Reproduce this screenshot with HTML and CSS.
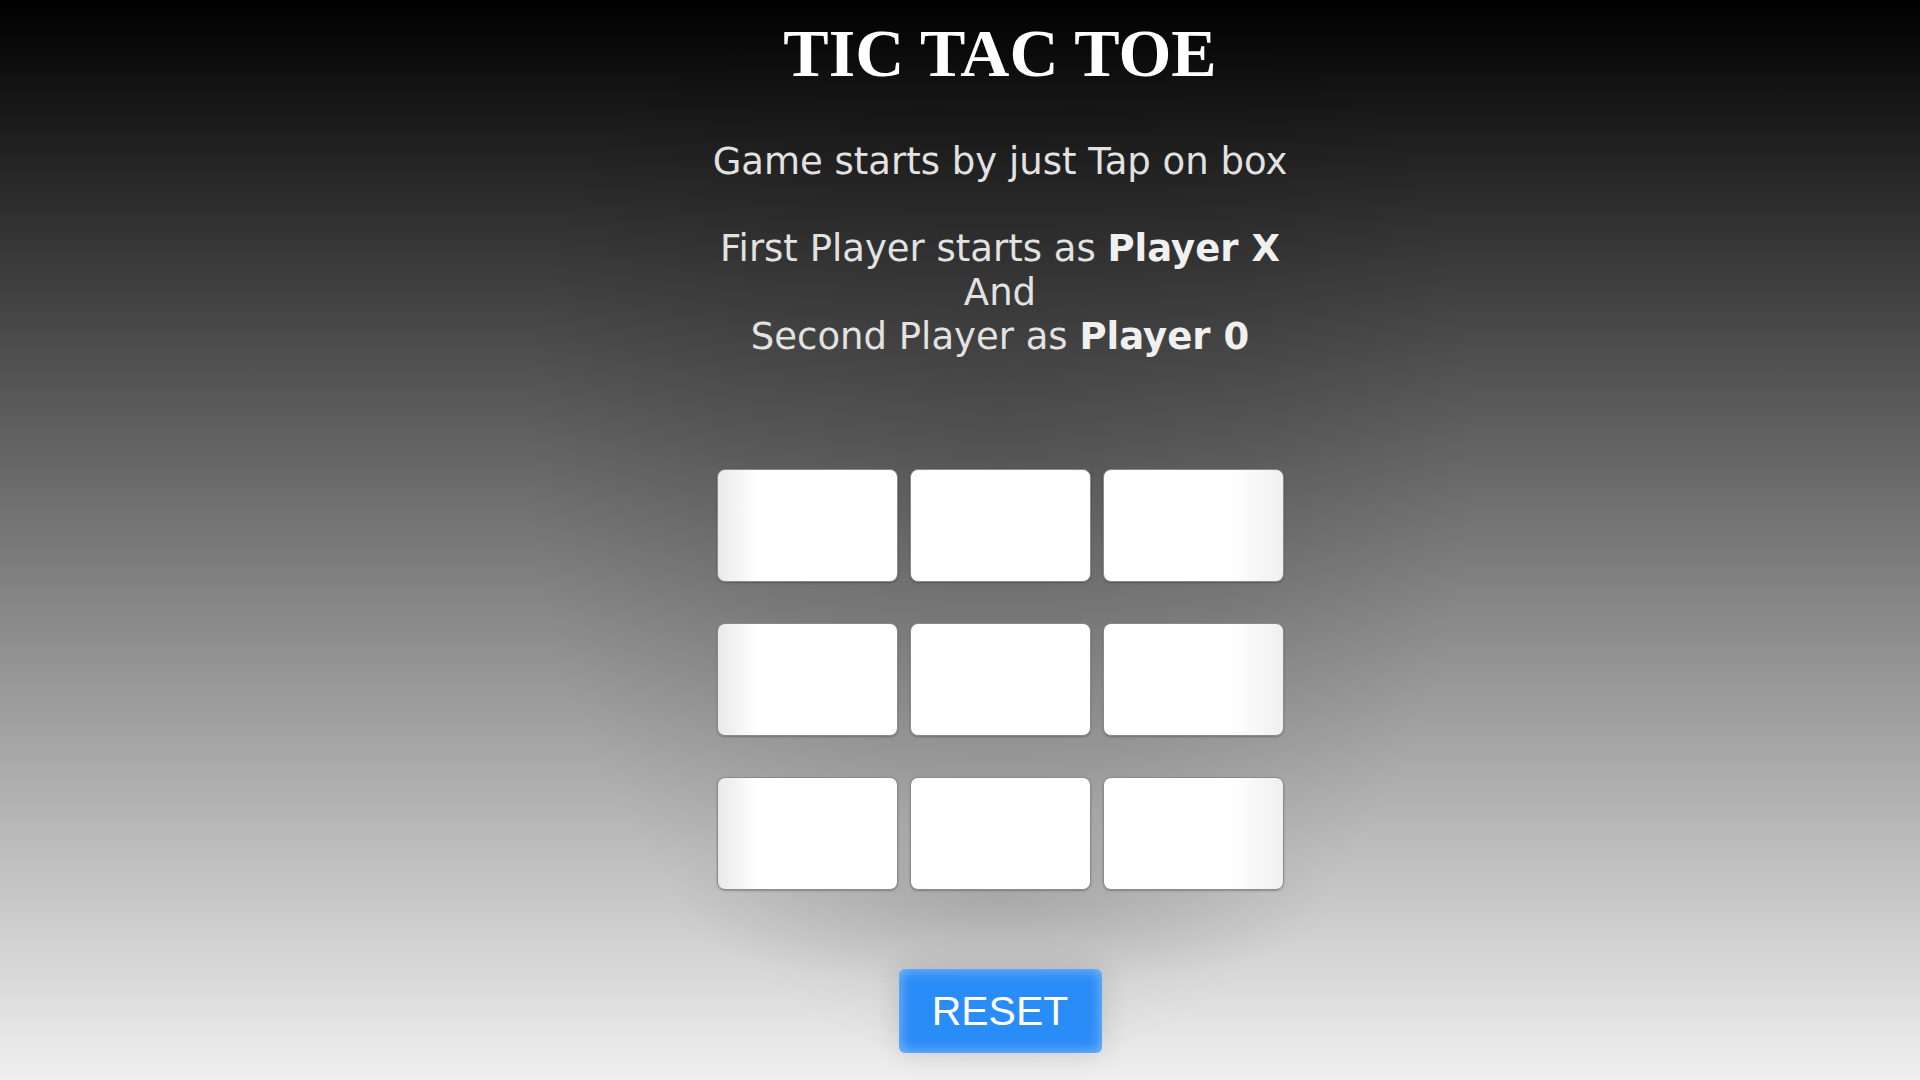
FILE: index.html
```html
<!DOCTYPE html>
<html lang="en">
<head>
<meta charset="utf-8">
<title>Tic Tac Toe</title>
<link rel="stylesheet" href="styles.css">
</head>
<body>
  <main class="game">
    <h1 class="title">TIC TAC TOE</h1>
    <p class="intro">Game starts by just Tap on box</p>
    <p class="rules">First Player starts as <b>Player X</b><br>And<br>Second Player as <b>Player 0</b></p>
    <div class="board">
      <button class="cell cell-left"></button>
      <button class="cell"></button>
      <button class="cell cell-right"></button>
      <button class="cell cell-left"></button>
      <button class="cell"></button>
      <button class="cell cell-right"></button>
      <button class="cell cell-left"></button>
      <button class="cell"></button>
      <button class="cell cell-right"></button>
    </div>
    <button class="reset">RESET</button>
  </main>
</body>
</html>
```
FILE: styles.css
```css
html, body {
  height: 100%;
}
body {
  margin: 0;
  padding-left: 80px;
  overflow: hidden;
  background:
    radial-gradient(ellipse 340px 90px at 1000px 900px, rgba(0, 0, 0, 0.1) 0%, rgba(0, 0, 0, 0) 100%),
    radial-gradient(ellipse 480px 640px at 1000px 430px, rgba(0, 0, 0, 0.17) 0%, rgba(0, 0, 0, 0.1) 55%, rgba(0, 0, 0, 0) 100%),
    linear-gradient(to bottom, #000 0%, #f0f0f0 100%);
  font-family: "DejaVu Sans", Verdana, sans-serif;
}
.game {
  width: 700px;
  margin: 0 auto;
  display: flex;
  flex-direction: column;
  align-items: center;
  text-align: center;
}
.title {
  margin: 20px 0 0;
  font-family: "Liberation Serif", "Times New Roman", serif;
  font-weight: bold;
  font-size: 68px;
  line-height: 67px;
  color: #fff;
}
.intro {
  margin: 53px 0 0;
  font-size: 37px;
  line-height: 44px;
  color: #e2e2e2;
}
.rules {
  margin: 43px 0 0;
  font-size: 37px;
  line-height: 44px;
  color: #e2e2e2;
}
.rules b {
  font-weight: bold;
  color: #f0f0f0;
}
.board {
  margin-top: 110px;
  display: grid;
  grid-template-columns: repeat(3, 181px);
  grid-template-rows: repeat(3, 113px);
  column-gap: 12px;
  row-gap: 41px;
}
.cell {
  border: 1px solid #8a8a8a;
  border-radius: 8px;
  background: #fff;
  box-shadow: 0 1px 2px rgba(0, 0, 0, 0.25);
  padding: 0;
}
.cell-left {
  background: linear-gradient(to right, #e9e9e9 0%, #fff 22%);
}
.cell-right {
  background: linear-gradient(to left, #f0f0f0 0%, #fff 30%);
}
.reset {
  flex-shrink: 0;
  margin-top: 79px;
  width: 203px;
  height: 84px;
  border: none;
  border-radius: 6px;
  background: #2a8cf6;
  box-shadow: inset 0 0 14px rgba(255, 255, 255, 0.45), 0 0 30px rgba(0, 0, 0, 0.14);
  color: #fff;
  font-family: "Liberation Sans", Arial, sans-serif;
  font-size: 41px;
  padding: 0;
}
```
